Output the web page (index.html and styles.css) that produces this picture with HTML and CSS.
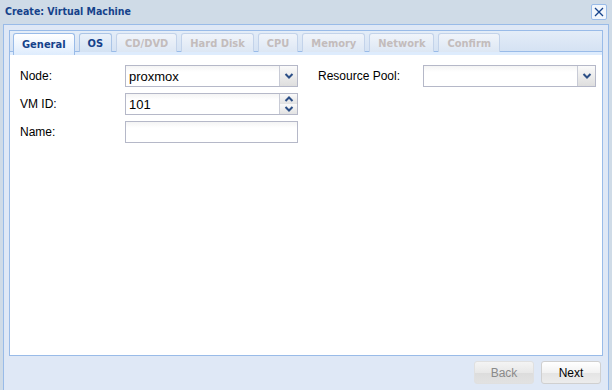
FILE: index.html
```html
<!DOCTYPE html>
<html lang="en">
<head>
    <meta charset="UTF-8">
    <title>Create: Virtual Machine</title>
    <link rel="stylesheet" href="styles.css">
</head>
<body>
    <div class="window">
        <div class="title-bar">
            <span class="title">Create: Virtual Machine</span>
            <span class="close">
                <svg width="12" height="12" viewBox="0 0 12 12"><path d="M2 2 L10 10 M10 2 L2 10" stroke="#15428b" stroke-width="1.3"/></svg>
            </span>
        </div>
        <div class="body">
            <div class="tab-panel">
                <div class="tab-strip">
                    <div class="tab active">General</div>
                    <div class="tab">OS</div>
                    <div class="tab disabled">CD/DVD</div>
                    <div class="tab disabled">Hard Disk</div>
                    <div class="tab disabled">CPU</div>
                    <div class="tab disabled">Memory</div>
                    <div class="tab disabled">Network</div>
                    <div class="tab disabled">Confirm</div>
                </div>
                <div class="content">
                    <div class="column">
                        <div class="row">
                            <label>Node:</label>
                            <div class="field">
                                <span class="value">proxmox</span>
                                <span class="trigger"><svg width="10" height="6" viewBox="0 0 10 6"><path d="M1.5 1 L5 4.5 L8.5 1" fill="none" stroke="#2c4f86" stroke-width="2"/></svg></span>
                            </div>
                        </div>
                        <div class="row">
                            <label>VM ID:</label>
                            <div class="field">
                                <span class="value">101</span>
                                <span class="spinner">
                                    <span><svg width="10" height="6" viewBox="0 0 10 6"><path d="M1.5 5 L5 1.5 L8.5 5" fill="none" stroke="#2c4f86" stroke-width="2"/></svg></span>
                                    <span><svg width="10" height="6" viewBox="0 0 10 6"><path d="M1.5 1 L5 4.5 L8.5 1" fill="none" stroke="#2c4f86" stroke-width="2"/></svg></span>
                                </span>
                            </div>
                        </div>
                        <div class="row">
                            <label>Name:</label>
                            <div class="field plain"></div>
                        </div>
                    </div>
                    <div class="column">
                        <div class="row">
                            <label>Resource Pool:</label>
                            <div class="field">
                                <span class="value"></span>
                                <span class="trigger"><svg width="10" height="6" viewBox="0 0 10 6"><path d="M1.5 1 L5 4.5 L8.5 1" fill="none" stroke="#2c4f86" stroke-width="2"/></svg></span>
                            </div>
                        </div>
                    </div>
                </div>
            </div>
            <div class="toolbar">
                <button class="btn" disabled>Back</button>
                <button class="btn">Next</button>
            </div>
        </div>
    </div>
</body>
</html>
```

FILE: styles.css
```css
body {
    margin: 0;
    font-family: 'Liberation Sans', Arial, sans-serif;
    font-size: 12px;
    background: #cfdbe7;
}
.window {
    width: 612px;
    height: 390px;
    display: flex;
    flex-direction: column;
    background: #cfdbe7;
}
.title-bar {
    height: 24px;
    display: flex;
    align-items: center;
    justify-content: space-between;
    padding: 0 5px 0 5px;
}
.title {
    font-family: 'DejaVu Sans Condensed', 'DejaVu Sans', sans-serif;
    font-stretch: condensed;
    font-weight: bold;
    font-size: 10.5px;
    color: #15428b;
    margin-top: -2px;
}
.close {
    width: 14px;
    height: 14px;
    border: 1px solid #99bbe8;
    border-radius: 2px;
    background: #f1f6fc;
    display: flex;
    align-items: center;
    justify-content: center;
    margin-top: -1px;
}
.body {
    flex: 1;
    margin: 0 3px 0 3px;
    border: 1px solid #99bbe8;
    border-bottom: none;
    background: #dfe8f6;
    display: flex;
    flex-direction: column;
    padding: 5px 5px 0 5px;
}
.tab-panel {
    height: 326px;
    display: flex;
    flex-direction: column;
}
.tab-strip {
    height: 24px;
    border: 1px solid #99bbe8;
    border-bottom: none;
    background: linear-gradient(#e4edf8, #d2e0f2);
    display: flex;
    align-items: flex-end;
    gap: 4px;
    padding: 0 0 0 3px;
    position: relative;
}
.tab-strip::after {
    content: '';
    position: absolute;
    left: 0;
    right: 0;
    bottom: 0;
    height: 3px;
    border-top: 1px solid #99bbe8;
    background: #deecfd;
}
.tab {
    height: 18px;
    border: 1px solid #aac4e6;
    border-bottom: none;
    border-radius: 3px 3px 0 0;
    background: linear-gradient(#eaf1fa, #d4e2f3);
    font-family: 'DejaVu Sans Condensed', 'DejaVu Sans', sans-serif;
    font-stretch: condensed;
    font-weight: bold;
    font-size: 11px;
    color: #15428b;
    padding: 0 8px;
    display: flex;
    align-items: center;
    margin-bottom: 3px;
    position: relative;
    z-index: 1;
}
.tab.active {
    background: linear-gradient(#ffffff, #deecfd);
    border-color: #99bbe8;
    margin-bottom: 0;
    padding-bottom: 1px;
    box-sizing: border-box;
    height: 22px;
    z-index: 2;
}
.tab.disabled {
    color: #c3bcbc;
    background: linear-gradient(#f0f4fa, #dde7f4);
    border-color: #c3d3ea;
}
.content {
    flex: 1;
    background: #fff;
    border: 1px solid #99bbe8;
    border-top: none;
    display: flex;
    padding: 10px 0 0 10px;
    gap: 20px;
}
.column {
    display: flex;
    flex-direction: column;
    gap: 6px;
}
.row {
    display: flex;
    align-items: center;
}
label {
    width: 105px;
    color: #000;
}
.field {
    width: 171px;
    height: 20px;
    border: 1px solid #b5b8c8;
    background: linear-gradient(#f4f4f4, #ffffff 30%);
    display: flex;
    align-items: center;
}
.value {
    flex: 1;
    padding-left: 3px;
    font-size: 13px;
}
.trigger {
    width: 17px;
    height: 20px;
    border-left: 1px solid #c8cbd6;
    background: linear-gradient(#fafafa, #dedede);
    display: flex;
    align-items: center;
    justify-content: center;
}
.spinner {
    width: 17px;
    height: 20px;
    display: flex;
    flex-direction: column;
    border-left: 1px solid #c8cbd6;
}
.spinner span {
    flex: 1;
    display: flex;
    align-items: center;
    justify-content: center;
    background: linear-gradient(#fafafa, #e2e2e2);
}
.toolbar {
    display: flex;
    justify-content: flex-end;
    gap: 7px;
    padding: 5px 2px 0 0;
}
.btn {
    width: 60px;
    height: 23px;
    border: 1px solid #d0d0d0;
    border-radius: 3px;
    background: linear-gradient(#ffffff, #f2f2f2 50%, #e4e4e4 51%, #ececec);
    font-family: 'Liberation Sans', Arial, sans-serif;
    font-size: 12px;
    color: #000;
    padding: 0;
}
.btn:disabled {
    color: #8a8a8a;
    background: linear-gradient(#f4f4f4, #e8e8e8 50%, #dcdcdc 51%, #e2e2e2);
    border-color: #e0e0e0;
}
```
